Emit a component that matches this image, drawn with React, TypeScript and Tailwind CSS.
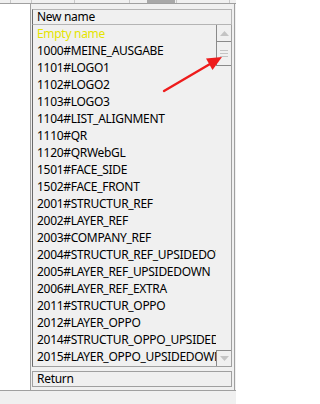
import React from 'react';

const rows = [
  '1000#MEINE_AUSGABE',
  '1101#LOGO1',
  '1102#LOGO2',
  '1103#LOGO3',
  '1104#LIST_ALIGNMENT',
  '1110#QR',
  '1120#QRWebGL',
  '1501#FACE_SIDE',
  '1502#FACE_FRONT',
  '2001#STRUCTUR_REF',
  '2002#LAYER_REF',
  '2003#COMPANY_REF',
  '2004#STRUCTUR_REF_UPSIDEDOWN',
  '2005#LAYER_REF_UPSIDEDOWN',
  '2006#LAYER_REF_EXTRA',
  '2011#STRUCTUR_OPPO',
  '2012#LAYER_OPPO',
  '2014#STRUCTUR_OPPO_UPSIDEDOWN',
  '2015#LAYER_OPPO_UPSIDEDOWN',
];

const App: React.FC = () => {
  return (
    <div
      className="relative w-[236px] h-[404px] overflow-hidden bg-[#f0f0f0] flex flex-col text-[12px] leading-none tracking-[-0.3px] text-black"
      style={{ fontFamily: '"Noto Sans", "Open Sans", sans-serif' }}
    >
      {/* top strip: bottom of the grid above */}
      <div className="h-[4px] flex border-b border-[#a0a0a0]">
        <div className="w-[11px] border-r border-[#c8c8c8]"></div>
        <div className="w-[21px] border-r border-[#c8c8c8]"></div>
        <div className="w-[43px] border-r border-[#c8c8c8]"></div>
        <div className="w-[55px] border-r border-[#c8c8c8]"></div>
        <div className="w-[17px]"></div>
        <div className="w-[28px] bg-[#a8a8a8]"></div>
        <div className="w-[2px] border-r border-[#c8c8c8]"></div>
        <div className="w-[53px] border-r border-[#c8c8c8]"></div>
      </div>

      {/* middle */}
      <div className="h-[387px] flex border-b border-[#a0a0a0]">
        <div className="w-[31px] bg-white border-r border-[#a0a0a0]"></div>
        <div className="w-[204px] flex flex-col pl-[1px] pt-[5px] border-r border-[#a0a0a0]">
          {/* header */}
          <div className="w-[200px] h-[16px] flex items-center pl-[4px] border border-[#b4b4b4] border-l-[#6a6a6a]">
            New name
          </div>
          {/* list */}
          <div className="w-[200px] h-[342px] flex border-l border-r border-b border-[#a0a0a0] border-l-[#6a6a6a]">
            <div className="flex-1 min-w-0 flex flex-col">
              <div className="h-[17px] flex items-center pl-[4px] text-[#e4e400] whitespace-nowrap">Empty name</div>
              {rows.map((r) => (
                <div key={r} className="h-[17px] flex items-center pl-[4px] whitespace-nowrap overflow-hidden">
                  {r}
                </div>
              ))}
            </div>
            {/* scrollbar */}
            <div className="w-[15px] flex flex-col">
              <div className="h-[17px] flex items-center justify-center border-l border-b border-[#8a8a8a] bg-[#f0f0f0]">
                <svg width="9" height="5" viewBox="0 0 9 5">
                  <path d="M0 5 L4.5 0 L9 5 Z" fill="#c4c4c4" />
                </svg>
              </div>
              <div className="h-[24px] flex flex-col items-center justify-center gap-[2px] border-l border-b border-[#8a8a8a] bg-[#f0f0f0]">
                <div className="w-[8px] h-[1px] bg-[#c4c4c4]"></div>
                <div className="w-[8px] h-[1px] bg-[#c4c4c4]"></div>
                <div className="w-[8px] h-[1px] bg-[#c4c4c4]"></div>
              </div>
              <div className="flex-1"></div>
              <div className="h-[16px] flex items-center justify-center border-l border-t border-[#8a8a8a] bg-[#f0f0f0]">
                <svg width="9" height="5" viewBox="0 0 9 5">
                  <path d="M0 0 L4.5 5 L9 0 Z" fill="#c4c4c4" />
                </svg>
              </div>
            </div>
          </div>
          {/* return */}
          <div className="mt-[4px] w-[200px] h-[16px] flex items-center pl-[4px] border border-[#a0a0a0]">
            Return
          </div>
        </div>
      </div>

      {/* red arrow annotation */}
      <svg className="absolute left-0 top-0 pointer-events-none" width="236" height="404" viewBox="0 0 236 404">
        <line x1="164" y1="91" x2="210" y2="64" stroke="#ee1c1c" strokeWidth="2.4" strokeLinecap="round" />
        <path d="M222 57 L206 58.5 L212.5 70 Z" fill="#ee1c1c" />
      </svg>
    </div>
  );
};

export default App;
